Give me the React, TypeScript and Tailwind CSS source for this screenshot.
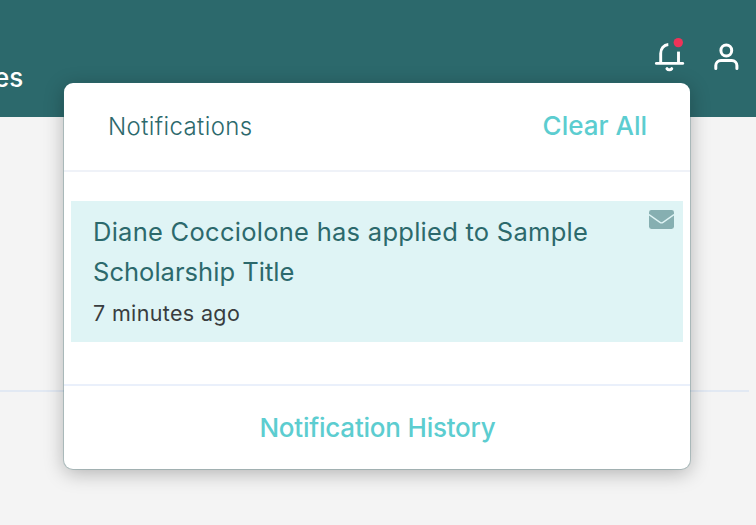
function BellIcon() {
  return (
    <svg width="32" height="36" viewBox="654 37 32 36" fill="none" aria-hidden="true">
      <g stroke="#fff" strokeWidth="2.9" strokeLinecap="round">
        <path d="M656.4 63.4h26.3" />
        <path d="M660.7 63V53.4c0-4.9 3.2-8.6 7.6-8.9" strokeLinecap="butt" />
        <path d="M678.5 63V51.6" strokeLinecap="butt" />
        <path d="M667 68.7c1.2 1.5 3.5 1.5 4.7 0" strokeWidth="3" />
      </g>
      <circle cx="678.3" cy="42.6" r="4.7" fill="#ee3358" />
    </svg>
  )
}

function UserIcon() {
  return (
    <svg width="28" height="30" viewBox="713 42 28 30" fill="none" stroke="#fff" strokeWidth="3" strokeLinecap="round" aria-hidden="true">
      <circle cx="726.3" cy="50.5" r="5.4" />
      <path d="M715.8 68.6v-3a5.1 5.1 0 0 1 5.1-5.1h10.9a5.1 5.1 0 0 1 5.1 5.1v3" />
    </svg>
  )
}

function EnvelopeIcon() {
  return (
    <svg width="25" height="19" viewBox="0 0 25 19" aria-hidden="true">
      <rect width="25" height="19" rx="2.4" fill="#86afb1" />
      <path d="M0 4.6l11 7.8c1 .7 2 .7 3 0L25 4.6" fill="none" stroke="#dff4f5" strokeWidth="1.3" />
    </svg>
  )
}

function NotificationPanel() {
  return (
    <section className="absolute left-16 top-[83px] h-[386px] w-[626px] rounded-[9px] bg-white font-['Inter',sans-serif] shadow-[0_0_0_1px_rgba(44,105,108,0.25),0_4px_20px_rgba(0,0,0,0.28)]">
      <header className="flex h-[89px] items-center justify-between border-b-2 border-[#eff2f8] pl-11 pr-[43px]">
        <h2 className="whitespace-nowrap text-[24px] font-light tracking-[0.4px] text-[#2c696c]">Notifications</h2>
        <button className="-mt-0.5 whitespace-nowrap text-[26px] font-medium text-[#5ccdd0]">Clear All</button>
      </header>

      <div className="h-[212px] px-[7px] pt-[29px]">
        <article className="flex h-[141px] justify-between bg-[#dff4f5] pl-[22px] pr-[9px]">
          <div className="whitespace-nowrap pt-[11px]">
            <p className="text-[25.5px] leading-[40px] tracking-[0.27px] text-[#2c696c]">
              Diane Cocciolone has applied to Sample
              <br />
              <span className="tracking-[0.03px]">Scholarship Title</span>
            </p>
            <p className="text-[21.5px] leading-[42px] tracking-[0.35px] text-[#393d3f]">7 minutes ago</p>
          </div>
          <div className="pt-[9px]">
            <EnvelopeIcon />
          </div>
        </article>
      </div>

      <footer className="flex h-[85px] items-center justify-center border-t-2 border-[#eaf0fb]">
        <button className="whitespace-nowrap pl-px text-[26px] font-medium tracking-[-0.22px] text-[#5ccdd0]">Notification History</button>
      </footer>
    </section>
  )
}

export default function App() {
  return (
    <div className="relative h-[525px] w-[756px] overflow-hidden bg-[#f4f4f4]">
      <header className="flex h-[117px] justify-between bg-[#2c696c]">
        <span className="-ml-1.5 mt-[60px] font-['Inter',sans-serif] text-[26px] leading-[36px] font-medium text-white">es</span>
        <div className="flex pr-[15px]">
          <div className="mr-[27px] pt-[37px]">
            <BellIcon />
          </div>
          <div className="pt-[42px]">
            <UserIcon />
          </div>
        </div>
      </header>
      <main className="h-[275px] w-[749px] border-b-2 border-[#e2e9f3]" />
      <NotificationPanel />
    </div>
  )
}
